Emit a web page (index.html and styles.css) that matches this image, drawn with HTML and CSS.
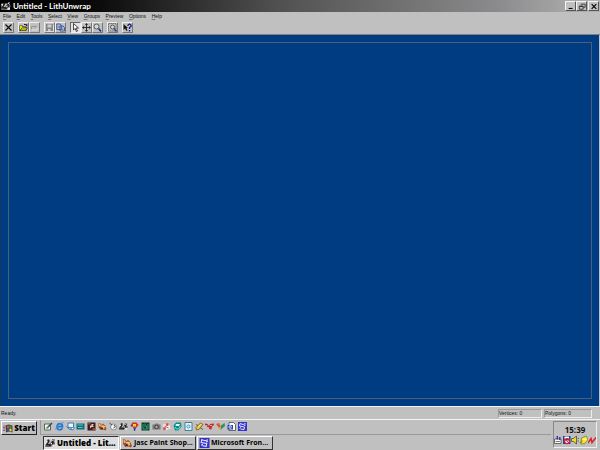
FILE: index.html
```html
<!DOCTYPE html>
<html lang="en">
<head>
<meta charset="utf-8">
<title>Untitled - LithUnwrap</title>
<link rel="stylesheet" href="styles.css">
</head>
<body>
<svg class="defs" aria-hidden="true">
  <symbol id="app" viewBox="0 0 20 20"><path fill="#b8b8b8" d="M1 5h17v13H1z"/><path fill="#222" d="M4 3h4v4l-3 5h3l4-4 2-6h4v3l-2 3 3 2-1 3-5 1-3 3H6L2 15l-2 3v-4l3-4z"/><path fill="#eee" d="M13 6l2-3h3l-3 3zM9 12l4-3v4zM1 6h3v3H1zM14 13h4v4h-4z"/><path fill="#666" d="M0 15h7l5 3H1zM16 9h3v3h-3z"/></symbol>
  <symbol id="psp" viewBox="0 0 18 18"><path fill="#a74b2a" d="M1 2l4 1 2 3 3-3 4 4 3 7-2 3-5-2-5 1-4-5z"/><path fill="#f0c55b" d="M2 3l3 2 1 4-4-1zM9 6l4 2 1 4-3 2-2-4z"/><path fill="#fff" d="M7 7h2v3H7zM12 8h2v2h-2z"/><path fill="#352430" d="M5 11l4 1 1 3-4-1zM13 9h1v2h-1z"/></symbol>
  <symbol id="fp" viewBox="0 0 18 18"><path fill="#3334c8" d="M0 0h18v18H0z"/><path fill="none" stroke="#e8e8ff" stroke-width="2" d="M15 3l-5 2-6-2-1 5 10 2-1 5-7-1M3 13l3-2M12 7l3-1"/></symbol>
</svg>
<div class="screen">
  <header class="titlebar">
    <svg class="appicon"><use href="#app"/></svg>
    <h1>Untitled - LithUnwrap</h1>
    <div class="window-controls">
      <button aria-label="Minimize"><svg viewBox="0 0 10 9"><path d="M2 7h5" stroke="#000" stroke-width="1.4"/></svg></button>
      <button aria-label="Restore"><svg viewBox="0 0 10 9"><path d="M4 3V1.5h5v4H7M1.5 4h5v4h-5zM1.5 4.5h5" fill="none" stroke="#222"/></svg></button>
      <button class="close" aria-label="Close"><svg viewBox="0 0 10 9"><path d="M2 1.5l6 6M8 1.5l-6 6" stroke="#000" stroke-width="1.5"/></svg></button>
    </div>
  </header>
  <nav class="menu">
    <a href="#"><u>F</u>ile</a><a href="#"><u>E</u>dit</a><a href="#"><u>T</u>ools</a><a href="#"><u>S</u>elect</a><a href="#"><u>V</u>iew</a><a href="#"><u>G</u>roups</a><a href="#"><u>P</u>review</a><a href="#"><u>O</u>ptions</a><a href="#"><u>H</u>elp</a>
  </nav>
  <div class="toolbar">
    <div class="group"><button aria-label="New"><svg viewBox="0 0 18 18"><path d="M3 3l12 12M15 3L3 15" stroke="#111" stroke-width="2.6"/></svg></button></div>
    <div class="group">
      <button aria-label="Open"><svg viewBox="0 0 18 18"><path fill="#222" d="M1 5h6l1 2h7v2h3l-4 7H1zM10 2h5v1h2v3h-3V4h-4z"/><path fill="#f0f000" d="M2 6h4l1 2h6v1H6l-4 5z"/><path fill="#b8b40a" d="M6 10h10l-3 5H3z"/></svg></button>
      <button aria-label="Reload"><svg viewBox="0 0 18 18"><path fill="none" stroke="#eee" stroke-width="1.5" d="M4 14h10V9"/><path fill="none" stroke="#888" stroke-width="1.5" d="M3 12V7h8M10 5l3 3-3 3"/></svg></button>
    </div>
    <div class="group">
      <button aria-label="Save"><svg viewBox="0 0 18 18"><path fill="#858585" d="M2 2h14v14H2z"/><path fill="#ccc" d="M5 3h8v6H5zM6 12h5v4H6z"/><path stroke="#fff" d="M3 17h14V4" fill="none"/></svg></button>
      <button aria-label="Copy"><svg viewBox="0 0 18 18"><path fill="#bfcde0" stroke="#3a4f8a" stroke-width="1.8" d="M1.500 2h7l2 3v8h-9zM8 6h6l3 3v7H8z"/><path stroke="#405b94" stroke-width="1.2" d="M3 6h5M3 9h4M10 10h5M10 13h5"/></svg></button>
    </div>
    <div class="group">
      <button class="pressed" aria-label="Pointer"><svg viewBox="0 0 18 18"><path fill="#fff" stroke="#111" stroke-width="1.5" d="M5 1v13l3-3 3 6 2-1-3-6h5z"/></svg></button>
      <button aria-label="Move"><svg viewBox="0 0 18 18"><path d="M9 2v14M2 9h14" stroke="#222" stroke-width="1.8"/><path fill="#222" d="M9 0l3 4H6zM9 18l3-4H6zM0 9l4-3v6zM18 9l-4-3v6z"/></svg></button>
      <button aria-label="Zoom"><svg viewBox="0 0 18 18"><path d="M11 11l5 6" stroke="#162987" stroke-width="3"/><circle cx="7" cy="7" r="5" fill="#d1dddd" stroke="#333" stroke-width="1.5"/></svg></button>
    </div>
    <div class="group"><button aria-label="Zoom area"><svg viewBox="0 0 18 18"><path fill="none" stroke="#555" stroke-width="1.5" stroke-dasharray="3 1" d="M1 1h15v15H1z"/><path d="M12 11l5 6" stroke="#263987" stroke-width="2.500"/><circle cx="9" cy="8" r="4" fill="#d1dddd" stroke="#333" stroke-width="1.5"/></svg></button></div>
    <div class="group"><button aria-label="Help"><svg viewBox="0 0 18 18"><path fill="#111" d="M1 2v12l3-3 3 5 2-1-2-5h3z"/><path fill="none" stroke="#151a91" stroke-width="2.600" d="M10 6V4l3-2 3 2v3l-3 2v3M13 14v3"/></svg></button></div>
  </div>
  <main class="canvas"><div class="frame"></div></main>
  <footer class="status"><span class="ready">Ready.</span><span class="vertices">Vertices: 0</span><span class="polygons">Polygons: 0</span></footer>
  <section class="taskbar">
    <button class="start"><svg viewBox="0 0 20 18"><path fill="#4c403e" d="M5 3l6-2 8 2v14l-7-2-6 2z"/><path fill="#e54a30" d="M8 4l4-1v5H8z"/><path fill="#27a33c" d="M13 3l4 1v5l-4-1z"/><path fill="#245ad0" d="M8 9h4v5l-4 1z"/><path fill="#f5df2e" d="M13 9l4 1v5l-4-1z"/><path stroke="#883b3b" stroke-width="1.5" d="M1 4h3M0 7h4M1 10h3M0 13h4"/></svg>Start</button>
    <div class="bands">
      <div class="quick"><div class="shortcuts">
        <svg viewBox="0 0 18 18"><path fill="#f7f7e4" stroke="#486b69" stroke-width="2" d="M1 4h12v12H1z"/><path stroke="#2b4d43" stroke-width="3" d="M5 13L16 2"/><path stroke="#c7c750" stroke-width="2" d="M3 12h7"/></svg>
        <svg viewBox="0 0 18 18"><path fill="none" stroke="#2475ce" stroke-width="3.500" d="M4 9h11c0-8-11-8-11 1 0 7 9 7 11 2"/><path fill="none" stroke="#3c9ae8" stroke-width="2" d="M1 15C3 8 9 3 17 1"/></svg>
        <svg viewBox="0 0 18 18"><path fill="#f3f7ff" stroke="#3978bb" stroke-width="2" d="M4 2h11v9H4zM1 8l5 6 8 2 3-5"/><path fill="#4b8ed6" d="M6 10h8l-4 5z"/></svg>
        <svg viewBox="0 0 18 18"><path fill="#106b78" d="M1 3h16v12H1z"/><path fill="#5ec5c4" d="M3 5h11v2H3zM4 10h9v2H4z"/></svg>
        <svg viewBox="0 0 18 18"><path fill="#381d20" d="M1 1h16v16H1z"/><path fill="#b33b2a" d="M2 2h5v3H2zM11 12h5v4h-5z"/><path fill="#d7d2c5" d="M6 7h3V4h4v2h-2l3 4H9l-3 3z"/></svg>
        <svg><use href="#psp"/></svg>
        <svg viewBox="0 0 18 18"><circle cx="9" cy="10" r="6" fill="#f4f4f4" stroke="#8c8c8c" stroke-width="2"/><path stroke="#494949" stroke-width="2" d="M1 2l5 4M10 6l2 3M9 12l4-3"/></svg>
        <svg><use href="#app"/></svg>
        <svg viewBox="0 0 18 18"><path fill="#d23022" d="M2 5l3-4h8l4 5-5 6H7z"/><path fill="#ffca35" d="M6 4h6v5H6z"/><path fill="#274e9a" d="M7 12h5l-2 6H8zM1 6h4v3H2z"/></svg>
        <svg viewBox="0 0 18 18"><path fill="#063b2e" d="M1 1h16v16H1z"/><path fill="none" stroke="#43af83" stroke-width="1.700" d="M4 4v10h10V4M8 3v7M11 7v5"/></svg>
        <svg viewBox="0 0 18 18"><path fill="#777" d="M1 5h4l2-2h5l2 2h3v10H1z"/><circle cx="9" cy="10" r="3.5" fill="#aaa" stroke="#444" stroke-width="2"/></svg>
        <svg viewBox="0 0 18 18"><path fill="#f7e8e7" d="M1 6L13 1l4 12-11 4z"/><path fill="#d64950" d="M9 2l5 1-2 5-5-1zM2 11l5-1 1 5-4 2z"/><path stroke="#7b5b5b" stroke-width="1.500" d="M5 8l8 4"/></svg>
        <svg viewBox="0 0 18 18"><path fill="#0e8c8b" d="M1 7l5-6h10l1 8-6 8H4z"/><path fill="#dcffff" d="M6 4h8l-2 4H5z"/><path fill="none" stroke="#67dfd7" stroke-width="2" d="M4 10l3 4h4l4-6"/></svg>
        <svg viewBox="0 0 18 18"><path fill="#dff5fa" stroke="#447f99" stroke-width="2" d="M2 1h14v16H2z"/><circle cx="9" cy="9" r="3" fill="none" stroke="#3698ab" stroke-width="2"/></svg>
        <svg viewBox="0 0 18 18"><path fill="#e7bd33" stroke="#6c5424" stroke-width="1.5" d="M2 11L11 2l5 3-8 10-5 1z"/><path stroke="#fff18e" stroke-width="2" d="M6 11l6-7"/><path stroke="#6c5424" stroke-width="2" d="M2 5l4 2M11 12l5 3"/></svg>
        <svg viewBox="0 0 18 18"><path fill="#c9232c" d="M0 3l5 1 3 4 2-4 7-1 1 3-4 3-1 6-5-1 1-3-5-1 1-3-5-1z"/><path fill="#e4b0a2" d="M10 6h4v2h-4z"/></svg>
        <svg viewBox="0 0 18 18"><path fill="#df5b25" d="M9 16L0 4l6-2 4 7z"/><path fill="#23946b" d="M9 16l1-9 7-5 1 6z"/><path fill="#e9bd35" d="M6 11l4-2-1 7z"/></svg>
        <svg viewBox="0 0 18 18"><path fill="#fff" stroke="#333" stroke-width="1.4" d="M4 1h9l4 4v12H4z"/><path fill="#2743be" d="M1 6h11v9H1z"/><path fill="none" stroke="#fff" stroke-width="1.5" d="M9 10H4c0-4 5-4 5 0M4 11c1 3 4 2 5 1"/></svg>
        <svg><use href="#fp"/></svg>
      </div></div>
      <div class="tasks">
        <button class="active"><svg><use href="#app"/></svg><span>Untitled - Lit...</span></button>
        <button><svg><use href="#psp"/></svg><span>Jasc Paint Shop...</span></button>
        <button><svg><use href="#fp"/></svg><span>Microsoft Fron...</span></button>
      </div>
    </div>
    <aside class="tray">
      <time>15:39</time>
      <div class="tray-icons">
        <svg viewBox="1 0 16 18"><path fill="#fff" stroke="#444" stroke-width="1.5" d="M2 7h13v9H2z"/><path fill="#35408f" d="M6 1h3v7H6zM11 3h3v6h-3z"/><path stroke="#777" stroke-width="2" d="M4 12h9"/></svg>
        <svg viewBox="1 0 16 18"><path fill="#2a3f91" d="M1 1h15v16H1z"/><path fill="#fff" d="M4 2h9v5H4zM5 10h8v5H5z"/><circle cx="9" cy="11" r="5" fill="none" stroke="#d42239" stroke-width="2.500"/><path stroke="#d42239" stroke-width="2" d="M5 8l8 7"/></svg>
        <svg viewBox="1 0 16 18"><path fill="#e4dc3b" stroke="#4b4914" stroke-width="1.5" d="M2 6h4l6-5v16l-6-5H2z"/><path stroke="#555" stroke-width="1.5" d="M14 6h3M14 11h3"/></svg>
        <svg viewBox="1 0 16 18"><path fill="#f5e922" stroke="#817519" stroke-width="1.5" d="M4 5l9-4 4 6-6 9-8 1z"/><path stroke="#fff" stroke-width="2" d="M7 7l7 2"/><path stroke="#537a4b" stroke-width="2" d="M1 15l5-4"/></svg>
        <svg viewBox="1 0 16 18"><path fill="none" stroke="#df2024" stroke-width="3" d="M1 15l6-9 2 8 8-10"/></svg>
      </div>
    </aside>
  </section>
</div>
</body>
</html>
```
FILE: styles.css
```css
* { box-sizing: border-box; }
body { margin: 0; background: #c0c0c0; color: #111; font: 5px/7px "Liberation Sans", sans-serif; }
button { padding: 0; border: 1px solid; border-color: #f4f4f4 #555 #555 #f4f4f4; background: #c0c0c0; color: #000; font: inherit; display: flex; align-items: center; justify-content: center; }
svg { display: block; flex: none; width: 9px; height: 9px; }
.defs { position: absolute; width: 0; height: 0; }
.screen { min-height: 100vh; display: flex; flex-direction: column; }

.titlebar { height: 12px; padding: 0 1px; display: flex; align-items: center; gap: 2px; background: linear-gradient(90deg, #000 0%, #080808 15%, #505050 46%, #8b8b8d 83%, #b4b4b4 100%); color: #fff; }
.titlebar .appicon { width: 10px; height: 10px; }
.titlebar h1 { margin: 0; flex: 1; font: 700 8px/11px Lato, sans-serif; white-space: nowrap; }
.window-controls { display: flex; }
.window-controls button { width: 11px; height: 10px; }
.window-controls svg { width: 8px; height: 7px; }
.window-controls .close { margin-left: 1px; }

.menu { width: 162px; height: 9px; padding: 1px 0 1px 3px; display: flex; justify-content: space-between; }
.menu a { color: #111; text-decoration: none; }
.menu u { text-underline-offset: 1px; text-decoration-thickness: 1px; text-decoration-color: #777; }

.toolbar { height: 14px; padding: 1px 3px; display: flex; gap: 4px; border-bottom: 1px solid #808080; }
.group { display: flex; }
.toolbar button { width: 11px; height: 11px; border-color: #eee #777 #777 #eee; }
.toolbar .pressed { border-color: #666 #eee #eee #666; background: #e4e4e4; }

.canvas { flex: 1; display: flex; padding: 7px; margin-right: 1px; background: #003c82; border-left: 1px solid #17365c; }
.frame { flex: 1; border: 1px solid #4a6079; }

.status { height: 13px; padding: 2px 8px 1px 1px; display: flex; gap: 2px; border-top: 1px solid #f4f4f4; line-height: 8px; }
.status .ready { flex: 1; }
.status .vertices, .status .polygons { border: 1px solid; border-color: #999 #eee #eee #999; line-height: 7px; }
.status .vertices { width: 44px; }
.status .polygons { width: 48px; }

.taskbar { height: 31px; padding: 0 3px 0 1px; display: flex; align-items: flex-start; border-top: 1px solid #f4f4f4; }
.start { width: 36px; height: 14px; margin-top: 1px; gap: 1px; border-color: #fff #222 #222 #fff; font: 800 8px/10px "Open Sans", sans-serif; }
.start svg { width: 10px; }
.bands { flex: 1; margin: 0 2px 0 3px; }
.quick { height: 15px; padding: 2px 0 0 3px; margin-bottom: 1px; border-left: 1px solid #999; border-bottom: 1px solid #999; }
.shortcuts { width: 203px; display: flex; justify-content: space-between; }
.tasks { display: flex; gap: 1px; padding-left: 3px; }
.tasks button { width: 76px; height: 14px; padding: 0 1px; gap: 1px; justify-content: flex-start; border-color: #fff #333 #333 #fff; font: 700 7px/10px "Open Sans", sans-serif; white-space: nowrap; }
.tasks .active { border-color: #333 #fff #fff #333; background: #dedede; font-size: 8px; font-weight: 800; }
.tasks svg { width: 11px; height: 10px; }
.tray { width: 44px; height: 27px; margin-top: 1px; padding-top: 2px; border: 1px solid; border-color: #888 #eee #eee #888; }
.tray time { display: block; text-align: center; font: 700 8px/11px "Open Sans", sans-serif; }
.tray-icons { display: flex; justify-content: space-between; }
.tray-icons svg { width: 8px; height: 10px; }
```
